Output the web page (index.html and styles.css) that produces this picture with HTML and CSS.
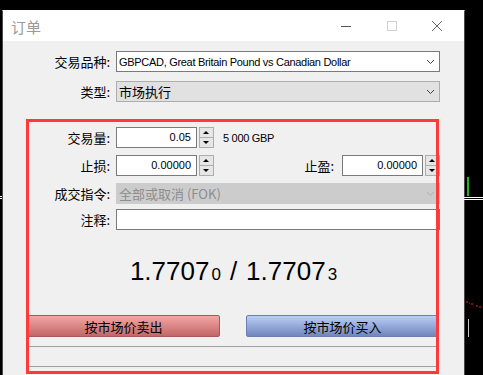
FILE: index.html
```html
<!DOCTYPE html>
<html lang="zh-CN">
  <head>
    <meta charset="UTF-8" />
    <meta name="viewport" content="width=device-width, initial-scale=1.0" />
    <title>订单</title>
    <link rel="stylesheet" href="styles.css">
  </head>
  <body>
    <div class="screen">
      <!-- bits of the chart behind the dialog -->
      <span class="chart-line line-a"></span>
      <span class="chart-line line-b"></span>
      <span class="chart-line line-c"></span>
      <span class="chart-line line-d"></span>
      <span class="chart-bar bar-green"></span>
      <span class="chart-bar bar-grey"></span>
      <svg class="chart-dash" width="18" height="12" viewBox="0 0 18 12">
        <path d="M1 1h2M4 2h1M6 3h2M11 5h2M14 6h2" stroke="#ff1a1a" stroke-width="1" fill="none" />
      </svg>

      <div class="window">
        <div class="titlebar">
          <span class="title">订单</span>
          <span class="ctl">
            <svg width="12" height="12" viewBox="0 0 12 12"><path d="M1 6.5h10" stroke="#555" fill="none" /></svg>
          </span>
          <span class="ctl">
            <svg width="12" height="12" viewBox="0 0 12 12"><rect x="1.5" y="1.5" width="9" height="9" stroke="#cfcfcf" fill="none" /></svg>
          </span>
          <span class="ctl">
            <svg width="12" height="12" viewBox="0 0 12 12"><path d="M1 1l10 10M11 1L1 11" stroke="#666" fill="none" /></svg>
          </span>
        </div>

        <div class="content">
          <div class="row first">
            <label class="lbl">交易品种:</label>
            <div class="select wide">
              <span class="tight">GBPCAD, Great Britain Pound vs Canadian Dollar</span>
              <svg class="chev" width="9" height="6" viewBox="0 0 9 6"><path d="M1 1l3.5 3.5L8 1" stroke="#444" fill="none" /></svg>
            </div>
          </div>
          <div class="row">
            <label class="lbl">类型:</label>
            <div class="select wide grey">
              <span class="cjk">市场执行</span>
              <svg class="chev" width="9" height="6" viewBox="0 0 9 6"><path d="M1 1l3.5 3.5L8 1" stroke="#444" fill="none" /></svg>
            </div>
          </div>

          <div class="group">
            <div class="row first">
              <label class="lbl">交易量:</label>
              <div class="num">0.05</div>
              <div class="spin"><span class="up"></span><span class="down"></span></div>
              <span class="note tight">5 000 GBP</span>
            </div>
            <div class="row gap7">
              <label class="lbl">止损:</label>
              <div class="num">0.00000</div>
              <div class="spin"><span class="up"></span><span class="down"></span></div>
              <label class="lbl-right">止盈:</label>
              <div class="num">0.00000</div>
              <div class="spin"><span class="up"></span><span class="down"></span></div>
            </div>
            <div class="row gap7">
              <label class="lbl">成交指令:</label>
              <div class="select wide disabled">
                <span class="cjk">全部或取消 (FOK)</span>
                <svg class="chev" width="9" height="6" viewBox="0 0 9 6"><path d="M1 1l3.5 3.5L8 1" stroke="#b0b0b0" fill="none" /></svg>
              </div>
            </div>
            <div class="row gap5">
              <label class="lbl">注释:</label>
              <div class="text wide"></div>
            </div>

            <div class="price">1.7707<small>0</small><span class="slash">/</span>1.7707<small>3</small></div>

            <div class="actions">
              <button class="sell">按市场价卖出</button>
              <button class="buy">按市场价买入</button>
            </div>
            <div class="rule"></div>
            <div class="rule low"></div>

            <!-- red annotation frame -->
            <div class="mark"></div>
          </div>
        </div>
      </div>
    </div>
  </body>
</html>
```

FILE: styles.css
```css
body {
  margin: 0;
  background-color: #000000;
  font-family: "Liberation Sans", Arial, sans-serif;
  font-size: 11px;
  color: #000000;
}
.screen {
  position: relative;
  width: 483px;
  height: 375px;
  overflow: hidden;
  padding-top: 10px;
  box-sizing: border-box;
}
/* chart pieces behind the window */
.chart-line {
  position: absolute;
  height: 1px;
  background-color: #ffffff;
}
.line-a { left: 464px; width: 19px; top: 197px; }
.line-b { left: 464px; width: 19px; top: 199px; }
.line-c { left: 0; width: 2px; top: 196px; }
.line-d { left: 0; width: 2px; top: 198px; }
.chart-bar {
  position: absolute;
  width: 2px;
}
.bar-green { left: 467px; top: 177px; height: 19px; background-color: #1fb91f; }
.bar-grey { left: 468px; top: 319px; height: 18px; width: 1px; background-color: #c8c8c8; }
.chart-dash {
  position: absolute;
  left: 465px;
  top: 301px;
}

.window {
  margin-left: 2px;
  width: 461px;
  height: 400px;
  border: 1px solid #4a4a4a;
  border-top-color: #ffffff;
  background-color: #f0f0f0;
}
.titlebar {
  display: flex;
  align-items: center;
  height: 30px;
  background-color: #ffffff;
}
.title {
  flex: 1;
  padding-left: 8px;
  font-family: "Noto Sans CJK SC", sans-serif;
  font-size: 15px;
  color: #9a9a9a;
}
.ctl {
  display: flex;
  width: 46px;
  justify-content: center;
}
.ctl:last-child {
  width: 44px;
  margin-right: 5px;
}

.content {
  padding-top: 10px;
}
.row {
  display: flex;
  align-items: center;
  height: 21px;
  margin-top: 9px;
}
.row.first { margin-top: 0; }
.row.gap7 { margin-top: 7px; }
.row.gap5 { margin-top: 5px; }
.lbl {
  width: 107px;
  margin-right: 6px;
  text-align: right;
  font-family: "Noto Sans CJK SC", sans-serif;
  font-size: 13px;
}
.lbl-right {
  margin-left: auto;
  margin-right: 8px;
  font-family: "Noto Sans CJK SC", sans-serif;
  font-size: 13px;
}
.select,
.text,
.num {
  height: 21px;
  box-sizing: border-box;
  border: 1px solid #7a7a7a;
  background-color: #ffffff;
}
.wide {
  width: 324px;
}
.select {
  display: flex;
  align-items: center;
  justify-content: space-between;
  padding: 0 4px 0 2px;
}
.select.grey {
  background-color: #e1e1e1;
  border-color: #adadad;
}
.select.disabled {
  background-color: #cccccc;
  border-color: #cccccc;
  color: #8d8d8d;
}
.tight {
  letter-spacing: -0.3px;
}
.cjk {
  font-family: "Noto Sans CJK SC", sans-serif;
  font-size: 13px;
}
.num {
  width: 81px;
  padding-right: 5px;
  text-align: right;
  line-height: 19px;
}
.spin {
  display: flex;
  flex-direction: column;
  width: 15px;
  height: 21px;
  margin-left: 2px;
  box-sizing: border-box;
  border: 1px solid #adadad;
  background-color: #e6e6e6;
}
.spin span {
  flex: 1;
  position: relative;
}
.spin .up {
  border-bottom: 1px solid #adadad;
}
.spin span:after {
  content: "";
  position: absolute;
  left: 3px;
  top: 3px;
  border-left: 3px solid transparent;
  border-right: 3px solid transparent;
}
.spin .up:after {
  border-bottom: 3px solid #000000;
}
.spin .down:after {
  border-top: 3px solid #000000;
}
.note {
  margin-left: 9px;
}
.row .spin:last-child {
  margin-right: 24px;
}

.group {
  position: relative;
  margin-top: 17px;
  padding-top: 8px;
  height: 320px;
}
.mark {
  position: absolute;
  left: 23px;
  top: 0;
  width: 413px;
  height: 255px;
  box-sizing: border-box;
  border: 3px solid #ff3a3a;
}
.price {
  margin-top: 26px;
  height: 30px;
  line-height: 30px;
  text-align: center;
  font-size: 26px;
}
.price small {
  margin-left: 2px;
  font-size: 17px;
}
.slash {
  margin: 0 9px;
}
.actions {
  display: flex;
  gap: 26px;
  margin-top: 29px;
  padding-left: 24px;
}
.actions button {
  width: 193px;
  height: 22px;
  padding: 0;
  font-family: "Noto Sans CJK SC", sans-serif;
  font-size: 13px;
  color: #000000;
  border-radius: 2px;
}
.sell {
  background: linear-gradient(#f5a5a5, #c26767);
  border: 1px solid #a85858;
}
.buy {
  background: linear-gradient(#b9cef6, #7187bd);
  border: 1px solid #6a7fb2;
}
.rule {
  height: 1px;
  margin: 9px 26px 0 24px;
  background-color: #a0a0a0;
}
.rule.low {
  margin-top: 19px;
}
```
